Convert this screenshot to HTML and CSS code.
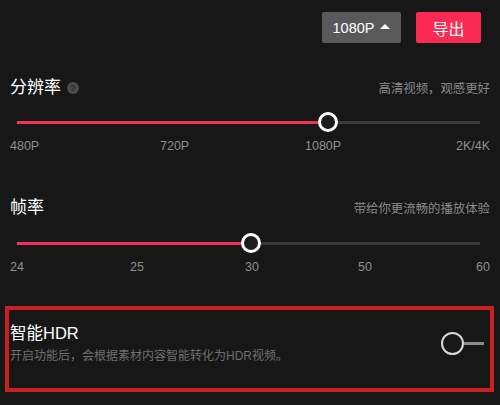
FILE: index.html
```html
<!DOCTYPE html>
<html lang="zh">
<head>
<meta charset="utf-8">
<link rel="stylesheet" href="styles.css">
</head>
<body>
<div class="page">
  <div class="topbar">
    <button class="btn-res">1080P <span class="tri"></span></button>
    <button class="btn-export">导出</button>
  </div>

  <section class="sec sec-res">
    <div class="row-title">
      <div class="title">分辨率 <span class="help">?</span></div>
      <div class="hint">高清视频，观感更好</div>
    </div>
    <div class="slider">
      <div class="track">
        <div class="fill" style="width:67.2%"><span class="thumb"></span></div>
      </div>
    </div>
    <div class="ticks ticks-res">
      <span>480P</span><span>720P</span><span>1080P</span><span class="last">2K/4K</span>
    </div>
  </section>

  <section class="sec sec-fps">
    <div class="row-title">
      <div class="title">帧率</div>
      <div class="hint">带给你更流畅的播放体验</div>
    </div>
    <div class="slider">
      <div class="track">
        <div class="fill" style="width:50.5%"><span class="thumb"></span></div>
      </div>
    </div>
    <div class="ticks ticks-fps">
      <span>24</span><span>25</span><span>30</span><span>50</span><span class="last">60</span>
    </div>
  </section>

  <section class="hdr-box">
    <div class="hdr-text">
      <div class="title">智能HDR</div>
      <div class="desc">开启功能后，会根据素材内容智能转化为HDR视频。</div>
    </div>
    <div class="toggle"><span class="knob"></span><span class="bar"></span></div>
  </section>
</div>
</body>
</html>
```

FILE: styles.css
```css
* { box-sizing: border-box; }
html, body {
  margin: 0;
  padding: 0;
  background: #171717;
}
body {
  width: 500px;
  height: 405px;
  overflow: hidden;
  font-family: "Liberation Sans", "Noto Sans CJK SC", sans-serif;
  color: #fff;
}
.page {
  padding-top: 12px;
}
.topbar {
  display: flex;
  justify-content: flex-end;
  gap: 15px;
  padding-right: 19px;
}
.topbar button {
  border: none;
  height: 31px;
  border-radius: 2px;
  color: #fff;
  font-family: inherit;
  padding: 0;
  display: flex;
  align-items: center;
  justify-content: center;
}
.btn-res {
  width: 79px;
  background: #595959;
  font-size: 14.5px;
  gap: 6px;
}
.tri {
  width: 0;
  height: 0;
  border-left: 5px solid transparent;
  border-right: 5px solid transparent;
  border-bottom: 5px solid #fff;
  margin-top: -2px;
}
.btn-export {
  width: 65px;
  background: #fc2b53;
  font-size: 16px;
}
.sec {
  padding: 0 10px;
}
.sec-res { margin-top: 33px; }
.sec-fps { margin-top: 43px; }
.row-title {
  display: flex;
  justify-content: space-between;
  align-items: center;
  height: 24px;
}
.title {
  font-size: 17px;
  line-height: 24px;
  display: flex;
  align-items: center;
}
.help {
  display: inline-flex;
  width: 12px;
  height: 12px;
  border-radius: 50%;
  background: #4a4a4a;
  color: #2a2a2a;
  font-size: 9px;
  line-height: 12px;
  align-items: center;
  justify-content: center;
  margin-left: 6px;
  font-weight: bold;
}
.hint {
  font-size: 12.4px;
  color: #8a8a8a;
}
.slider {
  height: 20px;
  display: flex;
  align-items: center;
  padding: 0 10px 0 7px;
}
.sec-res .slider { margin-top: 12px; }
.sec-fps .slider { margin-top: 13px; }
.track {
  flex: 1;
  height: 3px;
  background: #3a3a3a;
  position: relative;
}
.fill {
  height: 3px;
  background: #f0315a;
  position: relative;
}
.thumb {
  position: absolute;
  right: -10px;
  top: -8.5px;
  width: 20px;
  height: 20px;
  border-radius: 50%;
  border: 3px solid #fff;
  background: #1c1c1c;
}
.ticks {
  display: grid;
  font-size: 12.5px;
  line-height: 14px;
  color: #8f8f8f;
  margin-top: 7px;
}
.ticks .last { justify-self: end; }
.ticks-res { grid-template-columns: 150px 145px auto 1fr; }
.ticks-fps { grid-template-columns: 120px 115px 113px auto 1fr; }
.hdr-box {
  margin: 32px 6px 0 5px;
  height: 86px;
  border: 4px solid #cc1f1f;
  display: flex;
  align-items: flex-start;
  justify-content: space-between;
  padding: 11px 6px 0 1px;
}
.hdr-text .title {
  font-size: 16.5px;
}
.desc {
  font-size: 12px;
  color: #6f6f6f;
  margin-top: 3px;
  line-height: 16px;
}
.toggle {
  display: flex;
  align-items: center;
  margin-top: 11px;
}
.knob {
  width: 23px;
  height: 23px;
  border-radius: 50%;
  border: 2px solid #d8d8d8;
  background: #171717;
}
.bar {
  width: 20px;
  height: 3px;
  background: #8a8a8a;
}
```
